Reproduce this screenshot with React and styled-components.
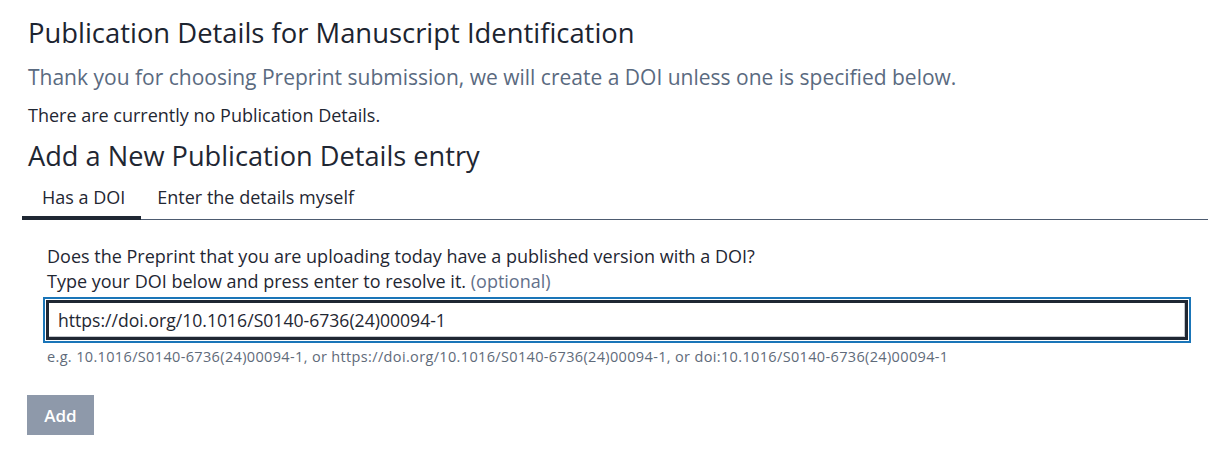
import React from "react";
import styled, { createGlobalStyle } from "styled-components";

const GlobalStyle = createGlobalStyle`
  body {
    margin: 0;
    background: #ffffff;
    font-family: "Open Sans", Lato, sans-serif;
    color: #1f2733;
  }
`;

const Page = styled.div`
  padding: 17px 9px 16px 28px;
`;

const Title = styled.h2`
  margin: 0;
  font-size: 27.4px;
  font-weight: 400;
  line-height: 32px;
  color: #1c2430;
`;

const Lead = styled.p`
  margin: 15px 0 0;
  font-size: 21px;
  line-height: 26px;
  color: #5a6a80;
`;

const Note = styled.p`
  margin: 14px 0 0;
  font-size: 18px;
  line-height: 22px;
`;

const SubTitle = styled.h3`
  margin: 14px 0 0;
  font-size: 27.2px;
  font-weight: 400;
  line-height: 32px;
`;

const TabList = styled.div`
  display: flex;
  margin: 6px 0 0 -6px;
  border-bottom: 1px solid #4d5b70;
`;

const Tab = styled.button`
  background: none;
  border: none;
  margin: 0 0 -1px;
  padding: 8px 16px 8px 20px;
  font-family: inherit;
  font-size: 18px;
  line-height: 22px;
  color: #1f2733;
  border-bottom: 4px solid ${(p) => (p.$active ? "#1f2733" : "transparent")};
  cursor: pointer;

  & + & {
    padding-left: 16px;
  }
`;

const Panel = styled.div`
  padding: 24px 0 0 19px;
  margin-right: 19px;
`;

const Question = styled.p`
  margin: 0;
  font-size: 18px;
  line-height: 25px;
`;

const Optional = styled.span`
  color: #63708a;
`;

const DoiInput = styled.input`
  display: block;
  box-sizing: border-box;
  width: 100%;
  height: 40px;
  margin: 6px 0 0 -1px;
  padding: 0 9px;
  border: 3px solid #1f2733;
  box-shadow: inset -1px -1px 0 #c3c7cd;
  outline: 2px solid #1a75b8;
  outline-offset: 1px;
  font-family: inherit;
  font-size: 17.6px;
  color: #1f2733;
`;

const Hint = styled.p`
  margin: 8px 0 0;
  font-size: 14.5px;
  letter-spacing: 0.35px;
  line-height: 18px;
  color: #5f6b7a;
`;

const AddButton = styled.button`
  margin: 29px 0 0 -1px;
  width: 67px;
  height: 40px;
  border: none;
  background: #8e99aa;
  color: #ffffff;
  font-family: inherit;
  font-size: 17px;
  font-weight: 600;
`;

export default function App() {
  return (
    <>
      <GlobalStyle />
      <Page>
        <Title>Publication Details for Manuscript Identification</Title>
        <Lead>
          Thank you for choosing Preprint submission, we will create a DOI
          unless one is specified below.
        </Lead>
        <Note>There are currently no Publication Details.</Note>
        <SubTitle>Add a New Publication Details entry</SubTitle>
        <TabList>
          <Tab $active>Has a DOI</Tab>
          <Tab>Enter the details myself</Tab>
        </TabList>
        <Panel>
          <Question>
            Does the Preprint that you are uploading today have a published
            version with a DOI?
          </Question>
          <Question>
            Type your DOI below and press enter to resolve it.{" "}
            <Optional>(optional)</Optional>
          </Question>
          <DoiInput
            type="text"
            defaultValue="https://doi.org/10.1016/S0140-6736(24)00094-1"
          />
          <Hint>
            e.g. 10.1016/S0140-6736(24)00094-1, or
            https://doi.org/10.1016/S0140-6736(24)00094-1, or
            doi:10.1016/S0140-6736(24)00094-1
          </Hint>
        </Panel>
        <AddButton type="button">Add</AddButton>
      </Page>
    </>
  );
}
